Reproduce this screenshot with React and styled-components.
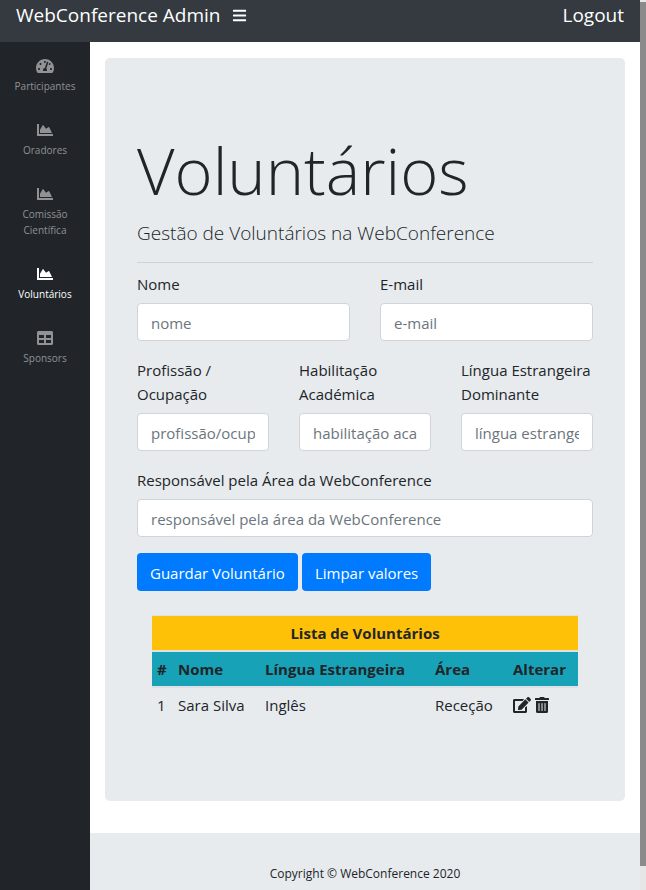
import React from "react";
import styled, { createGlobalStyle } from "styled-components";
import {
  FaBars,
  FaChartArea,
  FaEdit,
  FaTable,
  FaTachometerAlt,
  FaTrashAlt,
} from "react-icons/fa";

const GlobalStyle = createGlobalStyle`
  *, *::before, *::after { box-sizing: border-box; }
  body {
    margin: 0;
    background: #fff;
    color: #212529;
    font-family: "Segoe UI", "Open Sans", "Noto Sans", sans-serif;
    font-size: 15px;
    line-height: 24px;
  }
  input, button { font: inherit; }
`;

const Page = styled.div`
  display: grid;
  grid-template-columns: 90px minmax(0, 1fr) 6px;
  grid-template-rows: 42px 1fr;
  min-height: 100vh;
`;

const TopBar = styled.header`
  grid-column: 1 / 3;
  display: flex;
  align-items: flex-start;
  padding: 0 16px;
  background: #343a40;
  font-size: 19px;
  line-height: 30px;
`;

const TopLink = styled.a`
  color: #fff;
  text-decoration: none;
`;

const MenuButton = styled.button`
  display: flex;
  align-items: center;
  height: 30px;
  margin: 0 auto 0 12px;
  padding: 0;
  border: 0;
  background: none;
  color: #fff;
  font-size: 15px;
`;

const ScrollTrack = styled.div`
  grid-column: 3;
  grid-row: 1 / 3;
  padding: 2px 0 24px;
  display: flex;
  background: #e6e6e6;
`;

const ScrollThumb = styled.div`
  flex: 1;
  background: #8b8b8b;
`;

const Sidebar = styled.nav`
  background: #212529;
`;

const NavItem = styled.a`
  display: flex;
  flex-direction: column;
  align-items: center;
  padding: 12px 8px;
  color: ${({ $active }) => ($active ? "#fff" : "#909294")};
  font-size: 10px;
  line-height: 16px;
  text-align: center;
  text-decoration: none;
`;

const NavIcon = styled.span`
  display: flex;
  align-items: center;
  height: 24px;

  svg {
    width: 18px;
    height: 16px;
  }
`;

const Content = styled.div`
  display: flex;
  flex-direction: column;
`;

const Panel = styled.main`
  margin: 16px 15px 32px;
  padding: 64px 32px;
  border-radius: 5px;
  background: #e7ebee;
`;

const Title = styled.h1`
  margin: 0 0 4px;
  padding-top: 4px;
  font-size: 65px;
  font-weight: 300;
  line-height: 88px;
`;

const Lead = styled.p`
  margin: 0;
  font-size: 19px;
  font-weight: 300;
  line-height: 30px;
`;

const Divider = styled.hr`
  margin: 14px 0 8px;
  border: 0;
  border-top: 1px solid #cfd3d6;
`;

const FieldRow = styled.div`
  display: grid;
  grid-template-columns: repeat(${({ $columns }) => $columns}, minmax(0, 1fr));
  column-gap: 30px;
  margin-bottom: 16px;
`;

const Label = styled.label`
  display: block;
  padding: 1px 0 7px;
`;

const Input = styled.input`
  display: block;
  width: 100%;
  height: 38px;
  padding: 7px 13px 5px;
  border: 1px solid #ced4da;
  border-radius: 4px;
  background: #fff;
  color: #495057;
  &::placeholder { color: #6c757d; opacity: 1; }
`;

const Actions = styled.div`
  display: flex;
  gap: 4px;
  margin-bottom: 24px;
`;

const Button = styled.button`
  height: 38px;
  padding: 2px 13px 0;
  border: 0;
  border-radius: 4px;
  background: #007bff;
  color: #fff;
`;

const TableWrap = styled.div`
  padding: 0 15px 16px;
`;

const Table = styled.table`
  width: 100%;
  table-layout: fixed;
  border-collapse: collapse;
`;

const Column = styled.col`
  width: ${({ $width }) => $width}px;
`;

const HeadRow = styled.tr`
  background: ${({ $color }) => $color};
`;

const HeadCell = styled.th`
  padding: 5px;
  border-top: 1px solid #dee2e6;
  border-bottom: 2px solid #dee2e6;
  font-weight: 700;
  text-align: ${({ $center }) => ($center ? "center" : "left")};
  white-space: nowrap;
`;

const Cell = styled.td`
  padding: 5px 5px 4px;
  white-space: nowrap;
`;

const IconGroup = styled.div`
  display: flex;
  align-items: center;
  gap: 4px;
  height: 24px;
`;

const IconButton = styled.button`
  display: flex;
  padding: 0;
  border: 0;
  background: none;
  color: #212529;

  svg {
    width: ${({ $width }) => $width}px;
    height: 16px;
  }
`;

const Footer = styled.footer`
  flex: 1;
  padding-top: 32px;
  background: #e7ebee;
  font-size: 12px;
  line-height: 18px;
  text-align: center;
`;

const navItems = [
  { label: "Participantes", Icon: FaTachometerAlt },
  { label: "Oradores", Icon: FaChartArea },
  { label: "Comissão Científica", Icon: FaChartArea },
  { label: "Voluntários", Icon: FaChartArea, active: true },
  { label: "Sponsors", Icon: FaTable },
];

const fieldRows = [
  [
    { id: "nome", label: "Nome", placeholder: "nome" },
    { id: "email", label: "E-mail", placeholder: "e-mail", type: "email" },
  ],
  [
    { id: "profissao", label: "Profissão / Ocupação", placeholder: "profissão/ocupação" },
    { id: "habilitacao", label: "Habilitação Académica", placeholder: "habilitação académica" },
    { id: "lingua", label: "Língua Estrangeira Dominante", placeholder: "língua estrangeira dominante" },
  ],
  [
    {
      id: "area",
      label: "Responsável pela Área da WebConference",
      placeholder: "responsável pela área da WebConference",
    },
  ],
];

const columnWidths = [21, 87, 170, 78, 70];
const headings = ["#", "Nome", "Língua Estrangeira", "Área", "Alterar"];
const volunteers = [{ id: 1, name: "Sara Silva", language: "Inglês", area: "Receção" }];

export default function App() {
  return (
    <>
      <GlobalStyle />
      <Page>
        <TopBar>
          <TopLink href="#">WebConference Admin</TopLink>
          <MenuButton type="button" aria-label="Menu">
            <FaBars />
          </MenuButton>
          <TopLink href="#logout">Logout</TopLink>
        </TopBar>
        <ScrollTrack aria-hidden="true">
          <ScrollThumb />
        </ScrollTrack>
        <Sidebar>
          {navItems.map(({ label, Icon, active }) => (
            <NavItem
              key={label}
              href="#"
              $active={active}
              aria-current={active ? "page" : undefined}
            >
              <NavIcon>
                <Icon />
              </NavIcon>
              {label}
            </NavItem>
          ))}
        </Sidebar>
        <Content>
          <Panel>
            <Title>Voluntários</Title>
            <Lead>Gestão de Voluntários na WebConference</Lead>
            <Divider />
            <form onSubmit={(event) => event.preventDefault()}>
              {fieldRows.map((fields) => (
                <FieldRow key={fields[0].id} $columns={fields.length}>
                  {fields.map(({ id, label, placeholder, type = "text" }) => (
                    <div key={id}>
                      <Label htmlFor={id}>{label}</Label>
                      <Input id={id} type={type} placeholder={placeholder} />
                    </div>
                  ))}
                </FieldRow>
              ))}
              <Actions>
                <Button type="submit">Guardar Voluntário</Button>
                <Button type="reset">Limpar valores</Button>
              </Actions>
            </form>
            <TableWrap>
              <Table>
                <colgroup>
                  {columnWidths.map((width, index) => (
                    <Column key={index} $width={width} />
                  ))}
                </colgroup>
                <thead>
                  <HeadRow $color="#ffc107">
                    <HeadCell colSpan={5} $center>
                      Lista de Voluntários
                    </HeadCell>
                  </HeadRow>
                  <HeadRow $color="#17a2b8">
                    {headings.map((heading) => (
                      <HeadCell key={heading}>{heading}</HeadCell>
                    ))}
                  </HeadRow>
                </thead>
                <tbody>
                  {volunteers.map(({ id, name, language, area }) => (
                    <tr key={id}>
                      <Cell>{id}</Cell>
                      <Cell>{name}</Cell>
                      <Cell>{language}</Cell>
                      <Cell>{area}</Cell>
                      <Cell>
                        <IconGroup>
                          <IconButton type="button" aria-label="Editar" $width={18}>
                            <FaEdit />
                          </IconButton>
                          <IconButton type="button" aria-label="Eliminar" $width={14}>
                            <FaTrashAlt />
                          </IconButton>
                        </IconGroup>
                      </Cell>
                    </tr>
                  ))}
                </tbody>
              </Table>
            </TableWrap>
          </Panel>
          <Footer>Copyright © WebConference 2020</Footer>
        </Content>
      </Page>
    </>
  );
}
